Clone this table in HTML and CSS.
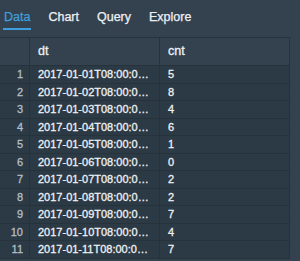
FILE: index.html
```html
<!DOCTYPE html>
<html lang="en">
<head>
    <meta charset="UTF-8">
    <title>Results</title>
    <link rel="stylesheet" href="styles.css">
</head>
<body>
    <div class="panel">
        <div class="tabs">
            <div class="tab active">Data</div>
            <div class="tab">Chart</div>
            <div class="tab">Query</div>
            <div class="tab">Explore</div>
        </div>

        <div class="grid">
            <div class="cell head idx"></div>
            <div class="cell head">dt</div>
            <div class="cell head">cnt</div>

            <div class="cell idx">1</div><div class="cell">2017-01-01T08:00:00.000Z</div><div class="cell">5</div>
            <div class="cell idx">2</div><div class="cell">2017-01-02T08:00:00.000Z</div><div class="cell">8</div>
            <div class="cell idx">3</div><div class="cell">2017-01-03T08:00:00.000Z</div><div class="cell">4</div>
            <div class="cell idx">4</div><div class="cell">2017-01-04T08:00:00.000Z</div><div class="cell">6</div>
            <div class="cell idx">5</div><div class="cell">2017-01-05T08:00:00.000Z</div><div class="cell">1</div>
            <div class="cell idx">6</div><div class="cell">2017-01-06T08:00:00.000Z</div><div class="cell">0</div>
            <div class="cell idx">7</div><div class="cell">2017-01-07T08:00:00.000Z</div><div class="cell">2</div>
            <div class="cell idx">8</div><div class="cell">2017-01-08T08:00:00.000Z</div><div class="cell">2</div>
            <div class="cell idx">9</div><div class="cell">2017-01-09T08:00:00.000Z</div><div class="cell">7</div>
            <div class="cell idx">10</div><div class="cell">2017-01-10T08:00:00.000Z</div><div class="cell">4</div>
            <div class="cell idx">11</div><div class="cell">2017-01-11T08:00:00.000Z</div><div class="cell">7</div>
        </div>
    </div>
</body>
</html>
```

FILE: styles.css
```css
html, body {
    margin: 0;
    height: 100%;
}

body {
    font-family: 'Liberation Sans', Arial, sans-serif;
    background-color: #34424f;
    color: #eef1f4;
    -webkit-font-smoothing: antialiased;
}

.panel {
    width: 300px;
    height: 261px;
    overflow: hidden;
}

.tabs {
    display: flex;
    gap: 16px;
    padding: 0 0 0 3px;
    height: 37px;
    box-sizing: border-box;
}

.tab {
    font-size: 12.5px;
    padding: 10px 1px 0;
    height: 30px;
    box-sizing: border-box;
    -webkit-text-stroke: 0.25px #eef1f4;
}

.tab.active {
    color: #3f9fdc;
    -webkit-text-stroke-color: #3f9fdc;
    border-bottom: 2px solid #3f9fdc;
}

.grid {
    display: grid;
    grid-template-columns: 30px 130px 130px;
    grid-template-rows: 28px;
    grid-auto-rows: 17.5px;
    width: 290px;
    border-top: 1px solid #27333d;
}

.cell {
    background-color: #2c3a45;
    border-right: 1px solid #26323c;
    border-bottom: 1px solid #26323c;
    box-sizing: border-box;
    font-size: 11px;
    line-height: 16.5px;
    padding: 0 8px;
    white-space: nowrap;
    overflow: hidden;
    text-overflow: ellipsis;
    -webkit-text-stroke: 0.3px #eef1f4;
}

.cell.idx {
    text-align: right;
    padding: 0 6px 0 0;
    color: #b4bec7;
    -webkit-text-stroke-color: #b4bec7;
}

.cell.head {
    background-color: #34424f;
    font-size: 12.5px;
    line-height: 27px;
}
```
